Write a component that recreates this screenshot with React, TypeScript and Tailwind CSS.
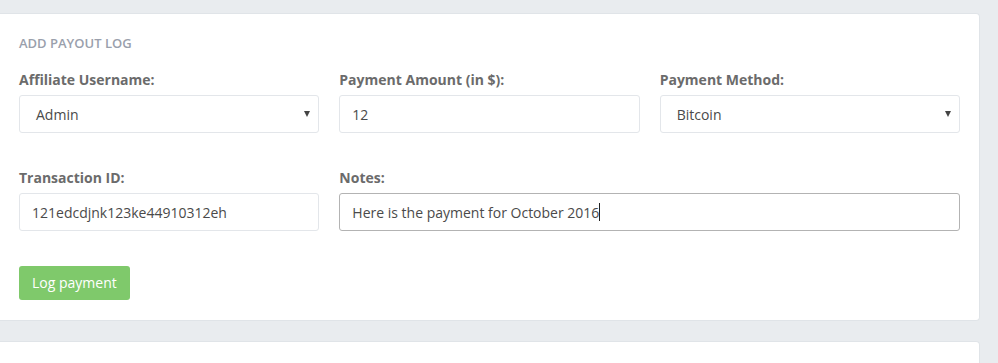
import React from "react";

const font = { fontFamily: '"Open Sans", "Noto Sans", sans-serif' };

function Field({ label, children, className = "" }: { label: string; children: React.ReactNode; className?: string }) {
  return (
    <div className={"flex flex-col " + className}>
      <label className="text-[14px] font-bold text-[#6b6b6b] leading-[20px] mb-[5px]">{label}</label>
      {children}
    </div>
  );
}

function SelectBox({ value }: { value: string }) {
  return (
    <div className="h-[38px] rounded-[3px] border border-[#e3e6ea] bg-white flex items-center justify-between pl-[16px] pr-[8px] text-[14px] text-[#4a4a4a]">
      <span>{value}</span>
      <svg width="6" height="6" viewBox="0 0 6 6"><path d="M0 0 L6 0 L3 6 Z" fill="#444" /></svg>
    </div>
  );
}

function TextBox({ value, focused = false, caret = false }: { value: string; focused?: boolean; caret?: boolean }) {
  return (
    <div
      className={
        "h-[38px] rounded-[3px] border bg-white flex items-center pl-[12px] text-[14px] text-[#4a4a4a] " +
        (focused ? "border-[#b3b3b3]" : "border-[#e3e6ea]")
      }
    >
      <span>{value}</span>
      {caret && <span className="inline-block w-px h-[18px] bg-[#222]" />}
    </div>
  );
}

export default function App() {
  return (
    <div className="w-[998px] h-[363px] bg-[#e9ecef] overflow-hidden pt-[13px]" style={font}>
      <div className="w-[980px] h-[308px] bg-white rounded-r-[4px] border border-l-0 border-[#e0e4e8] pl-[19px] pr-[19px] pt-[21px]">
        <div className="text-[13px] font-semibold text-[#9aa0ac] leading-[16px] uppercase">Add Payout Log</div>
        <div className="grid grid-cols-3 gap-x-[20px] mt-[19px]">
          <Field label="Affiliate Username:">
            <SelectBox value="Admin" />
          </Field>
          <Field label="Payment Amount (in $):">
            <TextBox value="12" />
          </Field>
          <Field label="Payment Method:">
            <SelectBox value="Bitcoin" />
          </Field>
        </div>
        <div className="grid grid-cols-3 gap-x-[20px] mt-[35px]">
          <Field label="Transaction ID:">
            <TextBox value="121edcdjnk123ke44910312eh" />
          </Field>
          <Field label="Notes:" className="col-span-2">
            <TextBox value="Here is the payment for October 2016" focused caret />
          </Field>
        </div>
        <button className="mt-[35px] h-[34px] px-[13px] rounded-[3px] bg-[#7fc96b] text-white text-[14px] leading-[34px]">
          Log payment
        </button>
      </div>
      <div className="w-[980px] h-[40px] bg-white rounded-r-[4px] border border-l-0 border-[#e0e4e8] mt-[20px]" />
    </div>
  );
}
